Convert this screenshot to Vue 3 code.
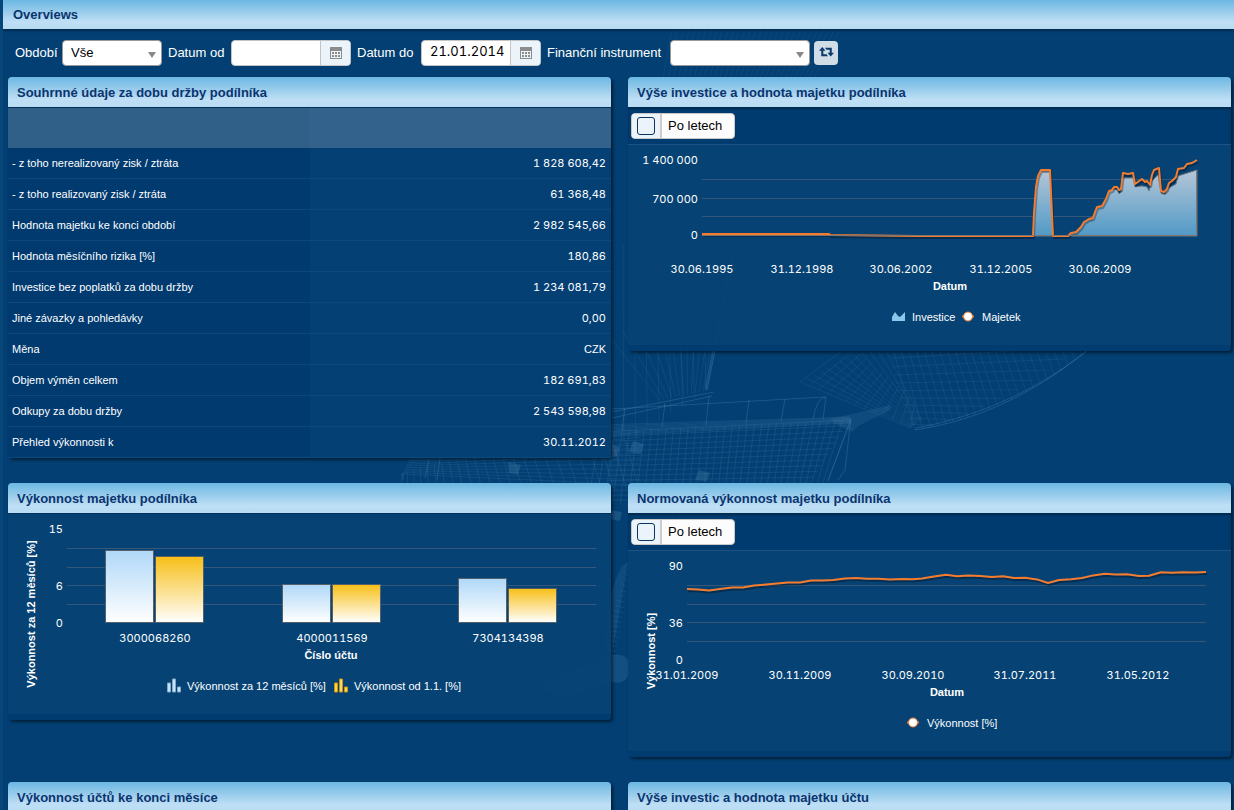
<script setup>
import { ref } from 'vue'

const period = ref('Vše')
const dateFrom = ref('')
const dateTo = ref('21.01.2014')
const instrument = ref('')
const assetsByYear = ref(false)
const performanceByYear = ref(false)

const summary = [
  ['- z toho nerealizovaný zisk / ztráta', '1 828 608,42'],
  ['- z toho realizovaný zisk / ztráta', '61 368,48'],
  ['Hodnota majetku ke konci období', '2 982 545,66'],
  ['Hodnota měsíčního rizika [%]', '180,86'],
  ['Investice bez poplatků za dobu držby', '1 234 081,79'],
  ['Jiné závazky a pohledávky', '0,00'],
  ['Měna', 'CZK'],
  ['Objem výměn celkem', '182 691,83'],
  ['Odkupy za dobu držby', '2 543 598,98'],
  ['Přehled výkonnosti k', '30.11.2012'],
]

const gridRows = [34.5, 53.5, 71.5, 90.5]
const assetGridRows = [34.5, 53.5, 71.5]

const assetTicks = [
  ['30.06.1995', 74], ['31.12.1998', 174], ['30.06.2002', 273], ['31.12.2005', 373], ['30.06.2009', 472],
]
const assetLine =
  '74,89 201,89 202,90 290,91 405,91 406,68 408,42 410,31 413,25 422,25 425,91 440,91 443,88 448,87 453,82 456,77 461,74 465,73 467,67 469,62 474,61 478,54 481,46 484,45 486,42 489,42 491,45 493,44 495,28 500,29 505,28 507,39 514,34 517,37 519,36 522,40 524,30 526,25 531,23 533,46 536,47 539,44 541,38 544,36 548,32 550,24 556,23 559,19 564,18 569,15'
const assetArea =
  '405,91 406,70 408,44 410,33 413,26 422,26 425,91 440,91 443,89 448,88 453,83 456,78 461,75 465,74 467,68 469,63 474,62 478,55 481,47 486,44 489,45 491,49 493,47 495,33 505,33 507,42 514,41 519,42 521,46 524,36 530,30 533,48 537,49 541,43 548,39 550,31 569,25 569,91'

const bars = [
  { account: '3000068260', x: 97, year: 36, ytd: 42 },
  { account: '4000011569', x: 274, year: 70, ytd: 70 },
  { account: '7304134398', x: 450, year: 64, ytd: 74 },
]

const performanceTicks = [
  ['31.01.2009', 59], ['30.11.2009', 172], ['30.09.2010', 285], ['31.07.2011', 397], ['31.05.2012', 510],
]
const performanceLine =
  '59,38 70,38.6 81,39.4 92,38 104,36.4 115,36.4 126,34.6 138,33.6 149,32.6 160,31.4 172,31.4 183,29.4 194,29.4 205,29 217,27.6 228,27 239,27.8 250,27.8 262,28.4 274,28 285,28.2 294,27.4 306,25.4 318,23.8 329,25.2 340,24.6 352,25 364,26 375,25.2 386,27 397,26.8 409,28.4 420,32 431,29 443,28.2 454,27 465,24.4 477,22.8 487,23.4 499,23.2 511,25 521,24.8 533,21.2 544,21.8 555,21.2 567,21.6 578,21'

// Wireframe of the sailing ship behind the panels
function fan(count, from, to) {
  let d = ''
  for (let i = 0; i <= count; i++) {
    const t = i / count
    const [a, b] = [from(t), to(t)]
    d += `M${a[0].toFixed(1)} ${a[1].toFixed(1)}L${b[0].toFixed(1)} ${b[1].toFixed(1)}`
  }
  return d
}
const curve = (p0, p1, p2) => (t) => [
  (1 - t) * (1 - t) * p0[0] + 2 * t * (1 - t) * p1[0] + t * t * p2[0],
  (1 - t) * (1 - t) * p0[1] + 2 * t * (1 - t) * p1[1] + t * t * p2[1],
]
const seg = (p0, p1) => (t) => [p0[0] + (p1[0] - p0[0]) * t, p0[1] + (p1[1] - p0[1]) * t]
const sailEdge = curve([915, 430], [1085, 405], [1215, 200])
const sailMesh =
  fan(44, seg([880, 300], [1150, 120]), sailEdge) +
  fan(16, curve([915, 430], [885, 385], [890, 300]), curve([915, 430], [1060, 395], [1160, 260]))
const jibMesh =
  fan(12, seg([800, 382], [880, 340]), seg([910, 428], [922, 420])) +
  fan(12, seg([800, 382], [910, 428]), seg([850, 345], [915, 400]))
const riggingMesh =
  fan(12, seg([612, 340], [740, 230]), seg([660, 400], [707, 390])) + fan(8, seg([612, 260], [700, 130]), seg([612, 450], [706, 391]))
const topMesh = fan(30, seg([672, 30], [840, 30]), seg([640, 200], [780, 140])) + fan(24, seg([930, 110], [1234, 110]), seg([1000, 145], [1180, 145]))
const hullMesh =
  fan(34, seg([600, 432], [850, 420]), curve([590, 490], [720, 560], [828, 482])) +
  fan(14, seg([600, 432], [612, 500]), seg([850, 420], [800, 500])) +
  fan(8, seg([600, 425], [600, 436]), seg([850, 417], [851, 423]))
const sternMesh =
  fan(24, curve([402, 473], [470, 450], [625, 440]), curve([400, 500], [480, 470], [640, 492])) +
  fan(10, seg([410, 458], [402, 474]), seg([640, 432], [640, 485]))
const keelMesh = fan(20, curve([630, 562], [612, 620], [590, 660]), curve([628, 565], [625, 620], [612, 665]))
</script>

<template>
  <div class="page">
    <svg class="ship" viewBox="0 0 1234 810" preserveAspectRatio="xMinYMin slice" aria-hidden="true">
      <g fill="none" stroke="#5a8fbd">
        <path :d="topMesh" opacity=".1" />
        <path :d="riggingMesh" opacity=".14" />
        <path :d="sailMesh" opacity=".14" />
        <path d="M915 430Q1085 405 1215 200M916 428Q1080 398 1190 240" opacity=".3" />
        <path :d="jibMesh" opacity=".13" />
        <path :d="hullMesh" opacity=".18" />
        <path :d="sternMesh" opacity=".17" />
        <path :d="keelMesh" opacity=".16" />
        <path
          d="M612 412L714 392M612 418L712 396M612 409L825 397M625 408L622 430M665 403L662 427M709 396L706 425M749 400L746 423M785 399L781 421M826 397L823 419M813 419Q817 397 826 397M851 420L828 480M851 418L845 470L838 480M403 473V480M429 460L425 478M440 458L437 480"
          opacity=".3"
        />
        <path d="M737 240L707 390M735 240L706 390M733 250L705 389" opacity=".28" />
      </g>
      <g fill="#5a8fbd">
        <path d="M830 419L891 405L890 410L858 426L852 432L838 425Z" opacity=".16" />
        <path d="M633 441l11 3-3 10-12-2ZM699 470l11 3-3 8-12-1ZM508 462l13 3-3 10-9-2ZM612 445l8 2-3 9-5 1ZM610 510l12 2-2 9-10-2Z" opacity=".25" />
        <path d="M628 562L612 656L606 652Q604 600 622 566Z" opacity=".16" />
        <path d="M612 655Q630 652 630 670Q626 686 612 682L575 695Q552 698 540 686Q575 668 612 655Z" opacity=".2" />
      </g>
    </svg>

    <header class="page-head"><h1>Overviews</h1></header>

    <form class="filters" @submit.prevent>
      <label for="period">Období</label>
      <span class="select">
        <select id="period" v-model="period">
          <option>Vše</option>
        </select>
        <svg viewBox="0 0 8 6" aria-hidden="true"><path d="M0 0h8L4 6z" /></svg>
      </span>
      <label for="date-from">Datum od</label>
      <span class="date">
        <input id="date-from" v-model="dateFrom" type="text" />
        <button type="button" aria-label="Vybrat datum od">
          <svg viewBox="0 0 12 12" aria-hidden="true"><path fill-rule="evenodd" d="M0 0h12v12H0zM1 4v7h10V4zM2 5h2v2H2zM5 5h2v2H5zM8 5h2v2H8zM2 8h2v2H2zM5 8h2v2H5zM8 8h2v2H8z" /></svg>
        </button>
      </span>
      <label for="date-to">Datum do</label>
      <span class="date">
        <input id="date-to" v-model="dateTo" type="text" />
        <button type="button" aria-label="Vybrat datum do">
          <svg viewBox="0 0 12 12" aria-hidden="true"><path fill-rule="evenodd" d="M0 0h12v12H0zM1 4v7h10V4zM2 5h2v2H2zM5 5h2v2H5zM8 5h2v2H8zM2 8h2v2H2zM5 8h2v2H5zM8 8h2v2H8z" /></svg>
        </button>
      </span>
      <label for="instrument">Finanční instrument</label>
      <span class="select">
        <select id="instrument" v-model="instrument">
          <option value=""></option>
        </select>
        <svg viewBox="0 0 8 6" aria-hidden="true"><path d="M0 0h8L4 6z" /></svg>
      </span>
      <button class="refresh" type="submit" aria-label="Obnovit">
        <svg viewBox="0 0 16 12" aria-hidden="true">
          <path d="M3.5 0L7 4H4.6V7.6H8L9.6 9.8H2.4V4H0zM12.5 10L9 6H11.4V3H8L6.4 .8H13.6V6H16z" />
        </svg>
      </button>
    </form>

    <main class="panels">
      <section class="panel">
        <h2>Souhrnné údaje za dobu držby podílníka</h2>
        <table>
          <thead>
            <tr><th></th><th></th></tr>
          </thead>
          <tbody>
            <tr v-for="[name, value] in summary" :key="name">
              <td>{{ name }}</td>
              <td :class="{ num: value !== 'CZK' }">{{ value }}</td>
            </tr>
          </tbody>
        </table>
      </section>

      <section class="panel">
        <h2>Výše investice a hodnota majetku podílníka</h2>
        <div class="tools">
          <label class="toggle"><span class="tick"><input v-model="assetsByYear" type="checkbox" /></span><span class="caption">Po letech</span></label>
        </div>
        <svg class="chart" viewBox="0 0 603 200">
          <defs>
            <linearGradient id="area-fill" x1="0" y1="0" x2="0" y2="1">
              <stop offset="0" stop-color="#b4c6d8" />
              <stop offset="1" stop-color="#519ac6" />
            </linearGradient>
          </defs>
          <g class="grid"><path v-for="y in assetGridRows" :key="y" :d="`M74 ${y}H569`" /></g>
          <g class="ticks end">
            <text x="70" y="19">1 400 000</text>
            <text x="70" y="58">700 000</text>
            <text x="70" y="94">0</text>
          </g>
          <polygon :points="assetArea" fill="url(#area-fill)" stroke="#6e7a84" />
          <polyline class="series shade" :points="assetLine" />
          <polyline class="series" :points="assetLine" />
          <path d="M74 90.5H568.5V26" fill="none" stroke="#81756f" />
          <g class="ticks mid"><text v-for="[t, x] in assetTicks" :key="t" :x="x" y="128">{{ t }}</text></g>
          <text class="axis" x="322" y="145">Datum</text>
          <path d="M264 176v-4l3-5 3 4 2 1 5-5v9z" fill="#8cc8ec" />
          <text class="legend" x="284" y="176">Investice</text>
          <path d="M334 171.5h12" stroke="#f0792c" stroke-width="2" />
          <circle cx="340" cy="171.5" r="4.5" fill="#fff" stroke="#f0792c" />
          <text class="legend" x="354" y="176">Majetek</text>
        </svg>
        <footer></footer>
      </section>

      <section class="panel">
        <h2>Výkonnost majetku podílníka</h2>
        <svg class="chart ruled" viewBox="0 0 603 200">
          <defs>
            <linearGradient id="bar-blue" x1="0" y1="0" x2="0" y2="1">
              <stop offset="0" stop-color="#b0d8f8" />
              <stop offset="1" stop-color="#fff" />
            </linearGradient>
            <linearGradient id="bar-gold" x1="0" y1="0" x2="0" y2="1">
              <stop offset="0" stop-color="#f7bf17" />
              <stop offset="1" stop-color="#fff" />
            </linearGradient>
          </defs>
          <g class="grid"><path v-for="y in gridRows" :key="y" :d="`M59 ${y}H588`" /></g>
          <g class="ticks end">
            <text x="55" y="19">15</text>
            <text x="55" y="76">6</text>
            <text x="55" y="113">0</text>
          </g>
          <g v-for="b in bars" :key="b.account" stroke="#54616b">
            <rect :x="b.x + 0.5" :y="b.year + 0.5" width="48" :height="108 - b.year" fill="url(#bar-blue)" />
            <rect :x="b.x + 50.5" :y="b.ytd + 0.5" width="48" :height="108 - b.ytd" fill="url(#bar-gold)" />
          </g>
          <g class="ticks mid"><text v-for="b in bars" :key="b.account" :x="b.x + 50" y="128">{{ b.account }}</text></g>
          <text class="axis" x="323" y="145">Číslo účtu</text>
          <text class="axis turned" transform="translate(27 100) rotate(-90)">Výkonnost za 12 měsíců [%]</text>
          <path d="M159.5 169h3v9h-3zM164.5 165h3v13h-3zM169.5 173h3v5h-3z" fill="#c6e2f6" stroke="#7ea8c8" />
          <text class="legend" x="179" y="176">Výkonnost za 12 měsíců [%]</text>
          <path d="M326.5 169h3v9h-3zM331.5 165h3v13h-3zM336.5 173h3v5h-3z" fill="#fbd45c" stroke="#c89410" />
          <text class="legend" x="346" y="176">Výkonnost od 1.1. [%]</text>
        </svg>
        <footer></footer>
      </section>

      <section class="panel">
        <h2>Normovaná výkonnost majetku podílníka</h2>
        <div class="tools">
          <label class="toggle"><span class="tick"><input v-model="performanceByYear" type="checkbox" /></span><span class="caption">Po letech</span></label>
        </div>
        <svg class="chart" viewBox="0 0 603 200">
          <g class="grid"><path v-for="y in gridRows" :key="y" :d="`M59 ${y}H578`" /></g>
          <g class="ticks end">
            <text x="55" y="19">90</text>
            <text x="55" y="76">36</text>
            <text x="55" y="113">0</text>
          </g>
          <polyline class="series shade" :points="performanceLine" />
          <polyline class="series" :points="performanceLine" />
          <g class="ticks mid"><text v-for="[t, x] in performanceTicks" :key="t" :x="x" y="128">{{ t }}</text></g>
          <text class="axis" x="319" y="145">Datum</text>
          <text class="axis turned" transform="translate(27 100) rotate(-90)">Výkonnost [%]</text>
          <path d="M279 171.5h12" stroke="#f0792c" stroke-width="2" />
          <circle cx="285" cy="171.5" r="4.5" fill="#fff" stroke="#f0792c" />
          <text class="legend" x="299" y="176">Výkonnost [%]</text>
        </svg>
        <footer></footer>
      </section>

      <section class="panel"><h2>Výkonnost účtů ke konci měsíce</h2></section>
      <section class="panel"><h2>Výše investic a hodnota majetku účtu</h2></section>
    </main>
  </div>
</template>

<style>
body {
  margin: 0;
  background: #033f72;
}
</style>

<style scoped>
.page {
  position: relative;
  box-sizing: border-box;
  height: 100vh;
  overflow: hidden;
  border-left: 3px solid #074678;
  background: #033f72;
  color: #fff;
  font: 13px/16px "Liberation Sans", Arial, sans-serif;
  font-variant-numeric: tabular-nums;
}
.ship {
  position: absolute;
  top: 0;
  left: -3px;
  width: 100vw;
  height: 100%;
}
.page-head,
.filters,
.panels {
  position: relative;
}
h1,
h2 {
  margin: 0;
  background: linear-gradient(#6cb8e3, #a3d1ee 50%, #bedff5 75%, #b9dcf2);
  color: #0b346e;
  font-size: 13px;
  font-weight: 700;
}
h1 {
  padding: 0 10px;
  line-height: 29px;
  box-shadow: 0 1px 3px rgba(0, 0, 0, 0.5);
}
.filters {
  display: grid;
  grid-template-columns: 45px 100px 61px 120px 62px 120px 121px 140px 24px;
  align-items: center;
  column-gap: 4px;
  box-sizing: border-box;
  height: 48px;
  padding: 0 10px;
}
.filters label {
  padding-left: 2px;
  white-space: nowrap;
}
.select {
  position: relative;
  display: flex;
}
.select select {
  width: 100%;
  height: 26px;
  padding: 0 8px;
  border: 1px solid #999;
  border-radius: 4px;
  appearance: none;
  background: #fff;
  color: #000;
  font: inherit;
}
.select svg {
  position: absolute;
  right: 6px;
  bottom: 8px;
  width: 8px;
  fill: #888;
  pointer-events: none;
}
.date {
  display: flex;
  box-sizing: border-box;
  height: 26px;
  overflow: hidden;
  border: 1px solid #c4c4c4;
  border-radius: 4px;
  background: #fff;
}
.date input {
  flex: 1;
  min-width: 0;
  padding: 0 4px 4px 8px;
  border: 0;
  background: none;
  color: #000;
  font: 13px Inter, sans-serif;
  font-variant-numeric: tabular-nums;
}
.date button {
  display: grid;
  place-items: center;
  width: 30px;
  padding: 0;
  border: 0;
  border-left: 1px solid #c4c4c4;
  background: #ecf4fb;
}
.date svg {
  width: 12px;
  fill: #8c8c8c;
}
.refresh {
  display: grid;
  place-items: center;
  height: 24px;
  padding: 0;
  border: 0;
  border-radius: 4px;
  background: #d0dce6;
}
.refresh svg {
  width: 15px;
  fill: #0a3a6b;
}
.panels {
  display: grid;
  grid-template-columns: 1fr 1fr;
  align-items: start;
  gap: 25px 17px;
  padding: 0 3px 0 5px;
}
.panel {
  border-radius: 4px;
  box-shadow: 2px 2px 3px rgba(0, 0, 0, 0.5);
}
h2 {
  padding: 2px 9px 0;
  border-radius: 4px 4px 0 0;
  line-height: 28px;
}
table {
  width: 100%;
  border-top: 1px solid #022f5a;
  border-collapse: separate;
  border-spacing: 0;
  table-layout: fixed;
  background: #044074;
  font-size: 11px;
}
th {
  height: 40px;
  padding: 0;
  background: #33638c;
}
th:first-child {
  background: #305f88;
}
td {
  box-sizing: border-box;
  height: 31px;
  padding: 0 5px 0 4px;
  border-bottom: 1px solid #0a497b;
}
td:first-child {
  background: #003a6f;
}
td:last-child {
  text-align: right;
}
.num {
  font-family: Inter, sans-serif;
}
.tools {
  display: flex;
  padding: 6px 3px 5px;
  border-bottom: 1px solid #1d5283;
  background: rgba(0, 59, 111, 0.85);
  box-shadow: inset 0 2px 2px rgba(0, 0, 0, 0.3);
}
.toggle {
  display: flex;
  box-sizing: border-box;
  height: 26px;
  overflow: hidden;
  border: 1px solid #c8c8c8;
  border-radius: 4px;
  background: #fcfcfc;
  color: #000;
}
.tick {
  display: grid;
  align-items: center;
  justify-items: start;
  box-sizing: border-box;
  width: 30px;
  padding-left: 5px;
  border-right: 2px solid #ccc;
  background: #ebf4fb;
}
.tick input {
  width: 18px;
  height: 18px;
  margin: 0;
  border: 1px solid #0b355f;
  border-radius: 3px;
  appearance: none;
}
.tick input:checked {
  background: #0b355f;
}
.caption {
  padding: 0 12px 0 6px;
  line-height: 24px;
}
.chart {
  display: block;
  width: 100%;
  background: rgba(6, 67, 116, 0.95);
}
.ruled {
  border-top: 1px solid #02335f;
}
.panel footer {
  height: 6px;
  border-radius: 0 0 4px 4px;
  background: #003c70;
}
.grid {
  fill: none;
  stroke: #35577a;
}
.chart text {
  fill: #fff;
  font-size: 11px;
}
.chart .ticks text {
  font-family: Inter, sans-serif;
}
.end {
  text-anchor: end;
}
.mid,
.axis {
  text-anchor: middle;
}
.axis {
  font-weight: 700;
}
.series {
  fill: none;
  stroke: #f57c2e;
  stroke-width: 2;
  stroke-linejoin: round;
}
.shade {
  stroke: #000;
  stroke-opacity: 0.3;
  transform: translate(1px, 2px);
}
</style>
